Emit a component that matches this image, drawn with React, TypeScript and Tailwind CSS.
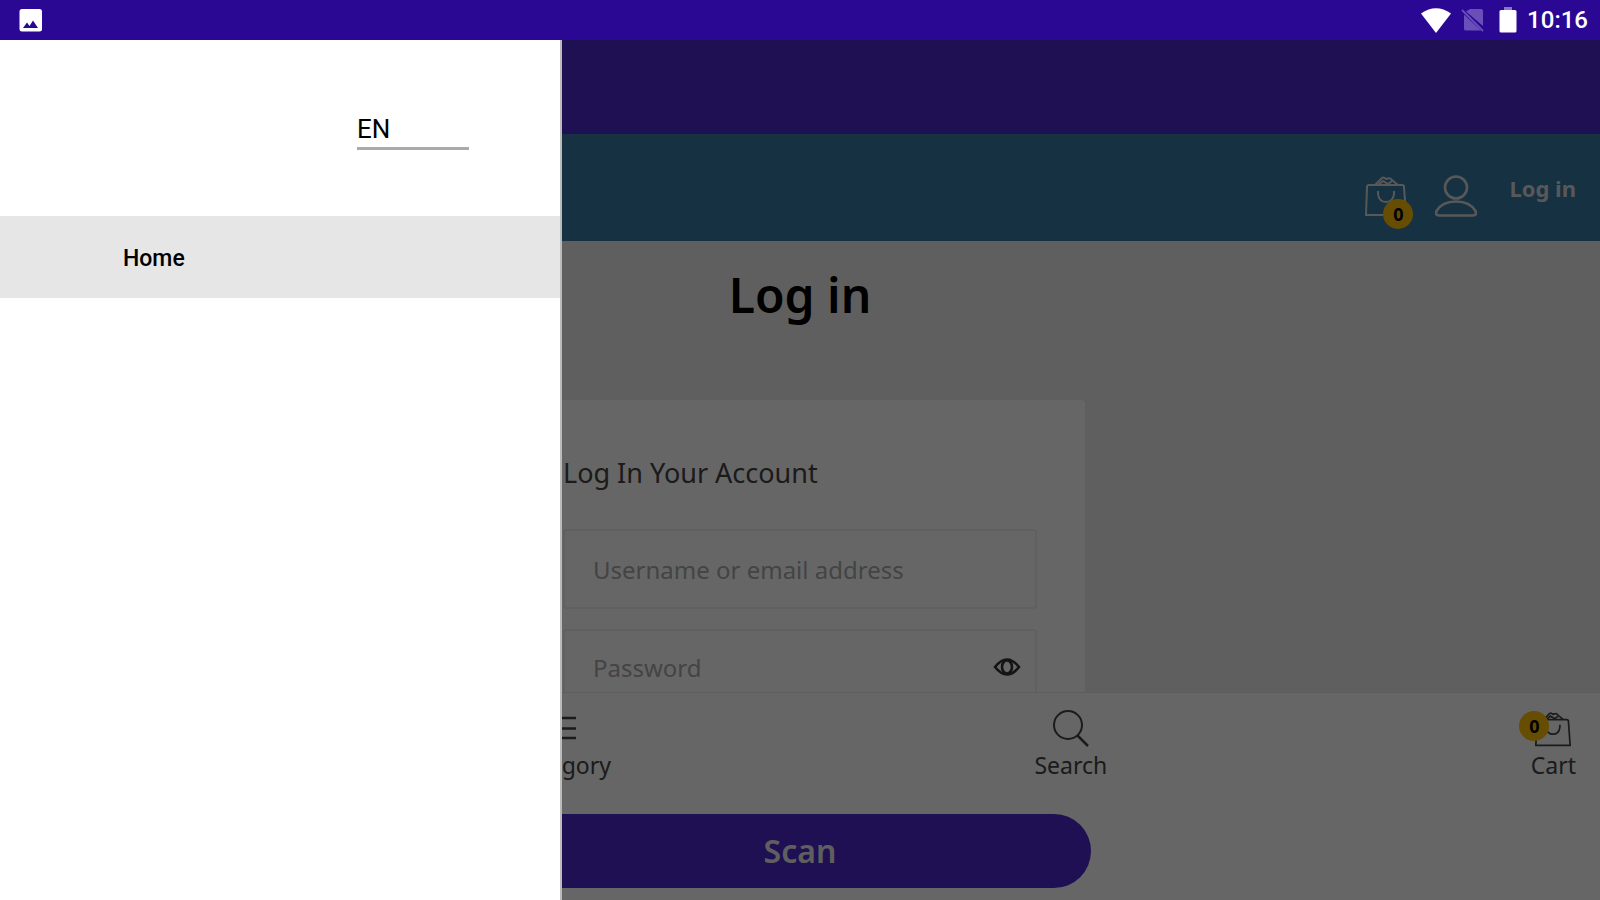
import React from "react";

const BagIcon = ({ className }: { className: string }) => (
  <svg viewBox="0 0 42 42" className={className} fill="none" stroke="currentColor" aria-hidden="true">
    <path d="M2 12 Q2 10 4 10 H37 Q39 10 39 12 L41 40 H1 Z" />
    <path d="M10 10 L16 4 Q18 1 21 4 Q25 2 27 5 L33 10" />
    <path d="M13 10 L18 6 L23 9 L27 6" />
    <path d="M13 16 V19 Q14 27 21 27 Q28 27 29 19 V16" />
  </svg>
);

const UserIcon = () => (
  <svg viewBox="0 0 42 42" className="size-[42px]" fill="none" stroke="currentColor" strokeWidth="2.6" aria-hidden="true">
    <ellipse cx="21" cy="12.500" rx="11" ry="11" />
    <path d="M4 40.500 Q0 40.500 1.500 36 Q7 26.500 21 26.500 Q35 26.500 40.500 36 Q42 40.500 38 40.500 Z" />
  </svg>
);

const StatusBar = () => (
  <div className="flex h-10 shrink-0 items-center justify-between bg-[#2a0894] pr-3 pl-[19px] text-white">
    <svg viewBox="0 0 24 24" className="size-6" aria-label="Screenshot saved">
      <rect x="0.500" y="1" width="22.500" height="22.500" rx="2.500" fill="#fff" />
      <path d="M4 20 L8 14.500 L10.500 18 L14 12.500 L19 20 Z" fill="#2a0894" />
    </svg>
    <div className="flex items-center gap-2.5">
      <svg viewBox="0 0 30 25" className="h-[25px] w-[30px]" aria-label="Wi-Fi">
        <path d="M0 5.500 Q15 -5 30 5.500 L15 25 Z" fill="#fff" />
      </svg>
      <svg viewBox="0 0 24 24" className="mr-1 size-6" aria-label="No SIM">
        <path d="M9 1 H20 Q22 1 22 3 V18 L5 3.500 Z M3 6.500 L20 22.500 H5 Q3 22.500 3 21 Z" fill="#6a4fb8" />
        <path d="M1 2 L22 23" stroke="#6a4fb8" strokeWidth="1.800" />
      </svg>
      <svg viewBox="0 0 18 26" className="h-[26px] w-[18px]" aria-label="Battery">
        <rect x="5" y="0" width="8" height="5" fill="#8a75cc" />
        <rect x="0.500" y="3" width="17" height="22.500" rx="1.500" fill="#fff" />
      </svg>
      <time className="font-[Roboto,sans-serif] text-2xl leading-7 font-medium">10:16</time>
    </div>
  </div>
);

const Badge = ({ className }: { className: string }) => (
  <span
    className={`absolute flex size-[30px] items-center justify-center rounded-full bg-[#ffc107] text-lg leading-none font-bold text-black ${className}`}
  >
    0
  </span>
);

const navLink = "flex flex-col items-center text-[23px] leading-8 text-[#444]";

export default function App() {
  return (
    <div className="flex h-screen flex-col overflow-hidden bg-white font-['Noto_Sans',sans-serif]">
      <StatusBar />
      <div className="relative flex min-h-0 flex-1 flex-col">
        <div className="h-[94px] shrink-0 bg-[#4c28d0]" />
        <header className="flex h-[107px] shrink-0 items-center justify-end gap-7 bg-[#357aa5] pr-6 text-[#ddd]">
          <a href="#cart" className="relative mt-4" aria-label="Shopping cart">
            <BagIcon className="size-[42px] stroke-2" />
            <Badge className="-right-1.5 -bottom-3" />
          </a>
          <a href="#account" className="mt-4" aria-label="Account">
            <UserIcon />
          </a>
          <a href="#login" className="pl-1 text-[22px] leading-7 font-bold">
            Log in
          </a>
        </header>

        <main className="flex min-h-0 flex-1 flex-col items-center overflow-hidden bg-[#eee]">
          <h1 className="mt-6 mb-[75px] text-5xl leading-[60px] font-semibold text-black">Log in</h1>
          <form className="flex w-[570px] shrink-0 flex-col rounded bg-white px-12 pt-[57px] pb-12">
            <h2 className="mb-10 text-[27px] leading-8 text-[#444]">Log In Your Account</h2>
            <input
              type="text"
              aria-label="Username or email address"
              placeholder="Username or email address"
              className="mb-5 h-20 w-full rounded border-2 border-[#f0f0f0] px-7 text-2xl placeholder:text-[#aaa]"
            />
            <div className="relative">
              <input
                type="password"
                aria-label="Password"
                placeholder="Password"
                className="h-[76px] w-full rounded border-2 border-[#f0f0f0] px-7 text-2xl placeholder:text-[#aaa]"
              />
              <button type="button" aria-label="Show password" className="absolute top-7 right-4 text-[#333]">
                <svg viewBox="0 0 28 20" className="h-5 w-7" fill="none" stroke="currentColor" strokeWidth="2.600">
                  <path d="M2 10 Q14 -5 26 10 Q14 25 2 10 Z" />
                  <ellipse cx="14" cy="10" rx="5" ry="6.500" />
                </svg>
              </button>
            </div>
          </form>
        </main>

        <nav className="flex h-28 shrink-0 items-start justify-between border-t border-[#e8e8e8] bg-white px-6 pt-4">
          <a href="#home" className={navLink}>
            <svg viewBox="0 0 40 40" className="size-10" fill="none" stroke="currentColor" strokeWidth="2">
              <path d="M4 20 L20 5 L36 20 M8 17 V36 H32 V17" />
            </svg>
            Home
          </a>
          <a href="#category" className={navLink}>
            <svg viewBox="0 0 40 40" className="size-10" stroke="currentColor" strokeWidth="2.500">
              <path d="M6 9 H34 M6 19.500 H34 M6 29 H34" />
            </svg>
            Category
          </a>
          <a href="#search" className={navLink}>
            <svg viewBox="0 0 40 40" className="size-10" fill="none" stroke="currentColor" strokeWidth="2">
              <circle cx="17" cy="16" r="14" />
              <path d="M26.500 26.500 L37 37" strokeWidth="2.500" />
            </svg>
            Search
          </a>
          <a href="#cart" className={navLink}>
            <span className="relative flex size-10 items-center justify-center">
              <BagIcon className="size-9 stroke-2" />
              <Badge className="right-6 bottom-2" />
            </span>
            Cart
          </a>
        </nav>
        <div className="flex shrink-0 justify-center bg-white pt-2.5 pb-3">
          <button type="button" className="h-[74px] w-[582px] rounded-full bg-[#4c28d0] text-[32px] font-semibold text-[#eee]">
            Scan
          </button>
        </div>

        <div className="absolute inset-0 bg-black/60" />
        <aside className="absolute inset-y-0 left-0 w-[35%] min-w-[562px] border-r-2 border-[#bbb] bg-white font-[Roboto,sans-serif] text-black">
          <div className="flex h-44 items-start justify-end pt-[70px] pr-[91px]">
            <select
              aria-label="Language"
              defaultValue="EN"
              className="h-10 w-28 appearance-none border-b-[3px] border-[#aaa] bg-white text-[26px] leading-8"
            >
              <option>EN</option>
            </select>
          </div>
          <a href="#home" className="flex h-[82px] items-center bg-[#e6e6e6] pt-1 pl-[123px] text-[23px] font-medium">
            Home
          </a>
        </aside>
      </div>
    </div>
  );
}
